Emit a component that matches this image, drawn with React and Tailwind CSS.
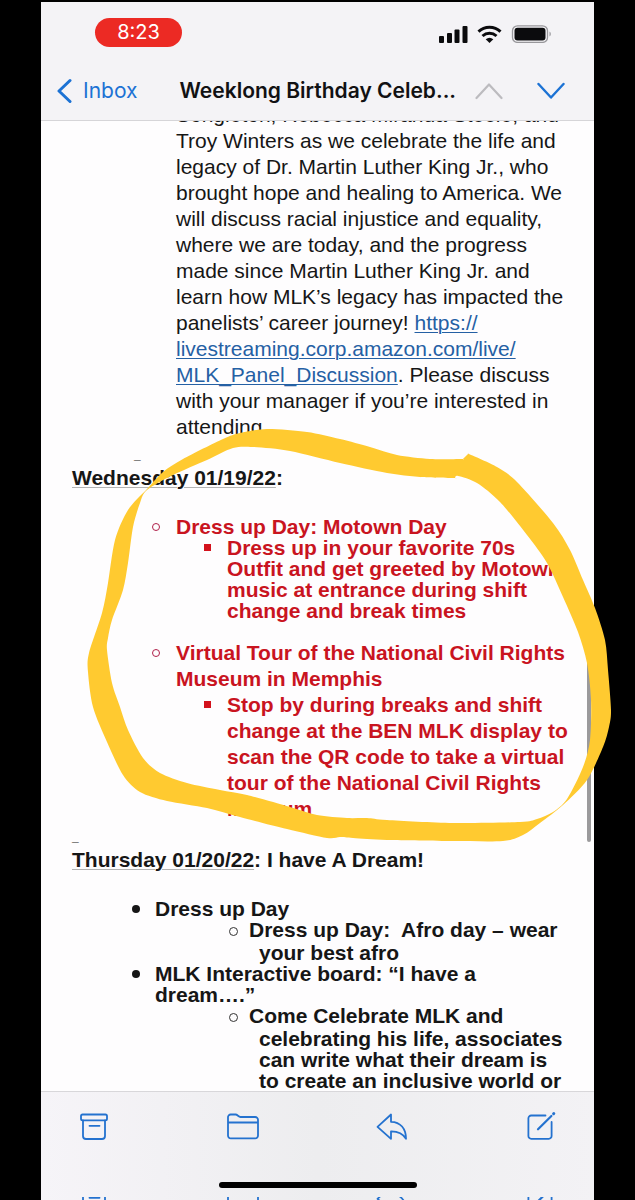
import React from "react";

const outerEdge = [
  [147, 489], [128, 510], [115, 540], [108, 583], [102, 613], [89, 653], [88, 672], [93, 707],
  [107, 742], [123, 775], [140, 792], [167, 801], [207, 808], [240, 817], [287, 829], [327, 838],
  [340, 837], [353, 838], [387, 840], [453, 841], [503, 841], [523, 835], [540, 823], [563, 805],
  [587, 780], [603, 747], [609, 727], [611, 710], [608, 670], [605, 640], [595, 608], [583, 580],
  [570, 550], [553, 523], [517, 482], [497, 467], [469, 454], [468, 454], [463, 459], [462, 459],
  [430, 459], [397, 455], [370, 447], [340, 439], [307, 432], [267, 429], [240, 433], [223, 439],
  [183, 459], [163, 472],
];

const innerEdge = [
  [147, 490], [173, 475], [207, 460], [233, 448], [253, 447], [290, 451], [340, 463], [387, 473],
  [420, 477], [454, 478], [455, 478], [458, 476], [477, 483], [500, 502], [527, 535], [547, 563],
  [563, 597], [578, 632], [587, 663], [591, 700], [590, 740], [583, 767], [567, 799], [553, 812],
  [537, 819], [520, 822], [453, 823], [387, 820], [367, 818], [347, 818], [317, 815], [290, 807],
  [247, 795], [220, 790], [187, 783], [160, 773], [143, 758], [128, 730], [120, 707], [112, 683],
  [107, 650], [108, 638], [112, 620], [123, 590], [128, 563], [133, 527], [140, 503],
];

function smoothLoop(points) {
  const n = points.length;
  let d = `M${points[0][0]} ${points[0][1]}`;
  for (let i = 0; i < n; i++) {
    const a = points[(i + n - 1) % n];
    const b = points[i];
    const c = points[(i + 1) % n];
    const e = points[(i + 2) % n];
    d += `C${b[0] + (c[0] - a[0]) / 7} ${b[1] + (c[1] - a[1]) / 7} ${c[0] - (e[0] - b[0]) / 7} ${c[1] - (e[1] - b[1]) / 7} ${c[0]} ${c[1]}`;
  }
  return d + "Z";
}

const stroke = {
  fill: "none",
  stroke: "currentColor",
  strokeWidth: 1.8,
  strokeLinecap: "round",
  strokeLinejoin: "round",
};

function ArchiveIcon() {
  return (
    <svg width="32" height="32" viewBox="0 0 32 32" {...stroke}>
      <rect x="3" y="3.500" width="26" height="5.800" rx="1.6" />
      <path d="M5 9.3V25a3 3 0 0 0 3 3H24a3 3 0 0 0 3-3V9.3M11.5 14.800H21.5" />
    </svg>
  );
}

function FolderIcon() {
  return (
    <svg width="32" height="32" viewBox="0 0 32 32" {...stroke}>
      <path d="M1 6.1A2.6 2.6 0 0 1 3.6 3.5H8.600C10.5 3.5 11.5 6 13.4 6H28.2A2.8 2.8 0 0 1 31 8.800V24.6A2.8 2.8 0 0 1 28.2 27.4H3.8A2.8 2.8 0 0 1 1 24.6ZM1 11.5H31" />
    </svg>
  );
}

function ReplyIcon() {
  return (
    <svg width="32" height="32" viewBox="0 0 32 32" {...stroke}>
      <path d="M15 3.5V10.8C24.5 11 30 17.5 30 27.800C26.8 22.5 22 20.3 15 20.4V27.800L1.5 15.8Z" />
    </svg>
  );
}

function ComposeIcon() {
  return (
    <svg width="32" height="32" viewBox="0 0 32 32" {...stroke}>
      <path d="M20.5 4.5H6.2A2.8 2.8 0 0 0 3.4 7.3V25A2.8 2.8 0 0 0 6.2 27.800H23.8A2.8 2.8 0 0 0 26.6 25V11" />
      <path d="M13 18.3L26.4 5" strokeWidth="2.2" />
      <path d="M28.6 2.7L28.8 2.5" strokeWidth="3" />
    </svg>
  );
}

const tools = [
  ["Archive", ArchiveIcon],
  ["Move to folder", FolderIcon],
  ["Reply", ReplyIcon],
  ["Compose", ComposeIcon],
];

function RingBullet() {
  return <span className="mr-4 mt-[7px] h-2 w-2 shrink-0 rounded-full border border-[#b0204a]" />;
}

function SquareBullet() {
  return <span className="mr-4 mt-[7px] h-[7px] w-[7px] shrink-0 bg-[#d3121c]" />;
}

export default function App() {
  return (
    <div className="relative h-screen overflow-hidden bg-black pt-[2px] pl-[41px] pr-[41px] font-['Liberation_Sans',Arial,sans-serif] text-[#161616]">
      <div className="flex h-full flex-col bg-[#fefdfe]">
        <header className="z-10 shrink-0 border-b border-[#d6d5d8] bg-[#f4f3f6] font-[Inter,'Liberation_Sans',sans-serif]">
          <div className="flex h-[60px] items-center justify-between pl-[54px] pr-[42px]">
            <span className="flex h-[29px] w-[87px] items-center justify-center rounded-full bg-[#ec2a24] text-[20px] text-white">
              8:23
            </span>
            <svg width="114" height="20" viewBox="0 0 114 20" className="mt-[2px]" fill="#0b0b0d">
              <rect x="1" y="13" width="5" height="7" rx="1" />
              <rect x="9" y="10" width="5" height="10" rx="1" />
              <rect x="16.500" y="6.500" width="5" height="13.500" rx="1" />
              <rect x="24.500" y="3" width="5" height="17" rx="1" />
              <g fill="none" stroke="#0b0b0d" strokeWidth="3">
                <path d="M40.500 8.600A16 16 0 0 1 62.500 8.600" />
                <path d="M44.500 13A10.500 10.500 0 0 1 58.500 13" />
              </g>
              <path d="M47.700 16.300A6 6 0 0 1 55.300 16.300L51.500 20Z" />
              <rect x="74.500" y="2.800" width="35" height="16.600" rx="5" fill="none" stroke="#98979b" strokeWidth="1.300" />
              <rect x="76.500" y="4.800" width="31" height="12.600" rx="3" />
              <path d="M111.500 8.500A3 3 0 0 1 111.500 13.500Z" fill="#98979b" />
            </svg>
          </div>
          <div className="flex h-[58px] items-center pl-4 pr-[29px]">
            <button className="flex items-center gap-[11px] text-[21px] text-[#1c72d4]">
              <svg width="15" height="26" viewBox="0 0 15 26" {...stroke} strokeWidth="3">
                <path d="M13 2.500L2 13L13 23.500" />
              </svg>
              Inbox
            </button>
            <h1 className="ml-[42px] flex-1 whitespace-nowrap text-[21px] font-semibold text-[#111113]">
              Weeklong Birthday Celeb...
            </h1>
            <button aria-label="Previous message" className="text-[#bcbbbf]">
              <svg width="28" height="18" viewBox="0 0 28 18" {...stroke} strokeWidth="2.200">
                <path d="M1.500 16L14 2.500L26.500 16" />
              </svg>
            </button>
            <button aria-label="Next message" className="ml-[34px] text-[#1c72d4]">
              <svg width="28" height="18" viewBox="0 0 28 18" {...stroke} strokeWidth="2.400">
                <path d="M1.500 2L14 15.500L26.500 2" />
              </svg>
            </button>
          </div>
        </header>

        <main className="min-h-0 flex-1 overflow-hidden whitespace-nowrap text-[21px] font-bold leading-[21px]">
          <p className="-mt-[19px] pl-[135px] font-normal leading-[26px]">
            Songleton, Rebecca Miranda Steele, and<br />
            Troy Winters as we celebrate the life and<br />
            legacy of Dr. Martin Luther King Jr., who<br />
            brought hope and healing to America. We<br />
            will discuss racial injustice and equality,<br />
            where we are today, and the progress<br />
            made since Martin Luther King Jr. and<br />
            learn how MLK’s legacy has impacted the<br />
            panelists’ career journey!{" "}
            <a href="#discussion" className="text-[#2560a4] underline decoration-1 underline-offset-2">
              https://<br />
              livestreaming.corp.amazon.com/live/<br />
              MLK_Panel_Discussion
            </a>
            . Please discuss<br />
            with your manager if you’re interested in<br />
            attending.
          </p>

          <div className="h-[25px] pl-[93px] text-[12px] leading-[30px]">_</div>
          <h2 className="pl-[31px] leading-[26px]">
            <span className="underline decoration-[#b4b4b4] decoration-1 underline-offset-2">Wednesday 01/19/22</span>:
          </h2>
          <ul className="mt-[25px] pl-[111px] text-[#c9141f]">
            <li className="flex">
              <RingBullet />
              <div>
                Dress up Day: Motown Day
                <div className="flex pl-7">
                  <SquareBullet />
                  <p>
                    Dress up in your favorite 70s<br />
                    Outfit and get greeted by Motown<br />
                    music at entrance during shift<br />
                    change and break times
                  </p>
                </div>
              </div>
            </li>
            <li className="mt-[19px] flex leading-[26px]">
              <span className="flex pt-[2px]"><RingBullet /></span>
              <div>
                Virtual Tour of the National Civil Rights<br />
                Museum in Memphis
                <div className="flex pl-7">
                  <span className="flex pt-[2px]"><SquareBullet /></span>
                  <p>
                    Stop by during breaks and shift<br />
                    change at the BEN MLK display to<br />
                    scan the QR code to take a virtual<br />
                    tour of the National Civil Rights<br />
                    Museum
                  </p>
                </div>
              </div>
            </li>
          </ul>

          <div className="h-[25px] pl-[31px] text-[12px] leading-[30px]">_</div>
          <h2 className="pl-[31px] leading-[26px]">
            <span className="underline decoration-[#b4b4b4] decoration-1 underline-offset-2">Thursday 01/20/22</span>: I have A Dream!
          </h2>
          <ul className="mt-[25px] pl-[91px]">
            <li className="flex">
              <span className="mr-[15px] mt-[7px] h-2 w-2 shrink-0 rounded-full bg-[#161616]" />
              <div>
                Dress up Day
                <div className="flex pl-[74px]">
                  <span className="mr-[11px] mt-2 h-[9px] w-[9px] shrink-0 rounded-full border border-[#333333]" />
                  <div>
                    Dress up Day:&nbsp; Afro day – wear
                    <p className="mt-[2px] pl-[10px]">your best afro</p>
                  </div>
                </div>
              </div>
            </li>
            <li className="flex">
              <span className="mr-[15px] mt-[7px] h-2 w-2 shrink-0 rounded-full bg-[#161616]" />
              <div>
                MLK Interactive board: “I have a<br />
                dream….”
                <div className="flex pl-[74px]">
                  <span className="mr-[11px] mt-2 h-[9px] w-[9px] shrink-0 rounded-full border border-[#333333]" />
                  <div>
                    Come Celebrate MLK and
                    <p className="mt-[2px] pl-[10px]">
                      celebrating his life, associates<br />
                      can write what their dream is<br />
                      to create an inclusive world or
                    </p>
                  </div>
                </div>
              </div>
            </li>
          </ul>
        </main>

        <footer className="z-10 shrink-0 border-t border-[#d8d7da] bg-linear-to-r from-[#f6f4f8] via-[#ededef] to-[#f3f2f5] text-[#2472cf]">
          <nav className="flex h-[70px] items-center justify-between px-[37px]">
            {tools.map(([label, Icon]) => (
              <button key={label} aria-label={label}>
                <Icon />
              </button>
            ))}
          </nav>
          <div className="flex h-[26px] items-end justify-center">
            <span className="h-[6px] w-[198px] rounded-full bg-black" />
          </div>
          <div aria-hidden="true" className="flex h-3 items-end justify-between px-[37px]">
            {tools.map(([label, Icon]) => (
              <span key={label} className="flex h-[3px] items-center overflow-hidden">
                <Icon />
              </span>
            ))}
          </div>
        </footer>
      </div>

      <div className="absolute right-[44px] top-[655px] h-[187px] w-1 rounded-full bg-[#9b9a9c]" />
      <svg
        width="635"
        height="1200"
        viewBox="0 0 635 1200"
        className="pointer-events-none absolute left-0 top-0 z-20"
        aria-hidden="true"
      >
        <path d={smoothLoop(outerEdge) + smoothLoop(innerEdge)} fill="#ffca30" fillRule="evenodd" />
      </svg>
    </div>
  );
}
